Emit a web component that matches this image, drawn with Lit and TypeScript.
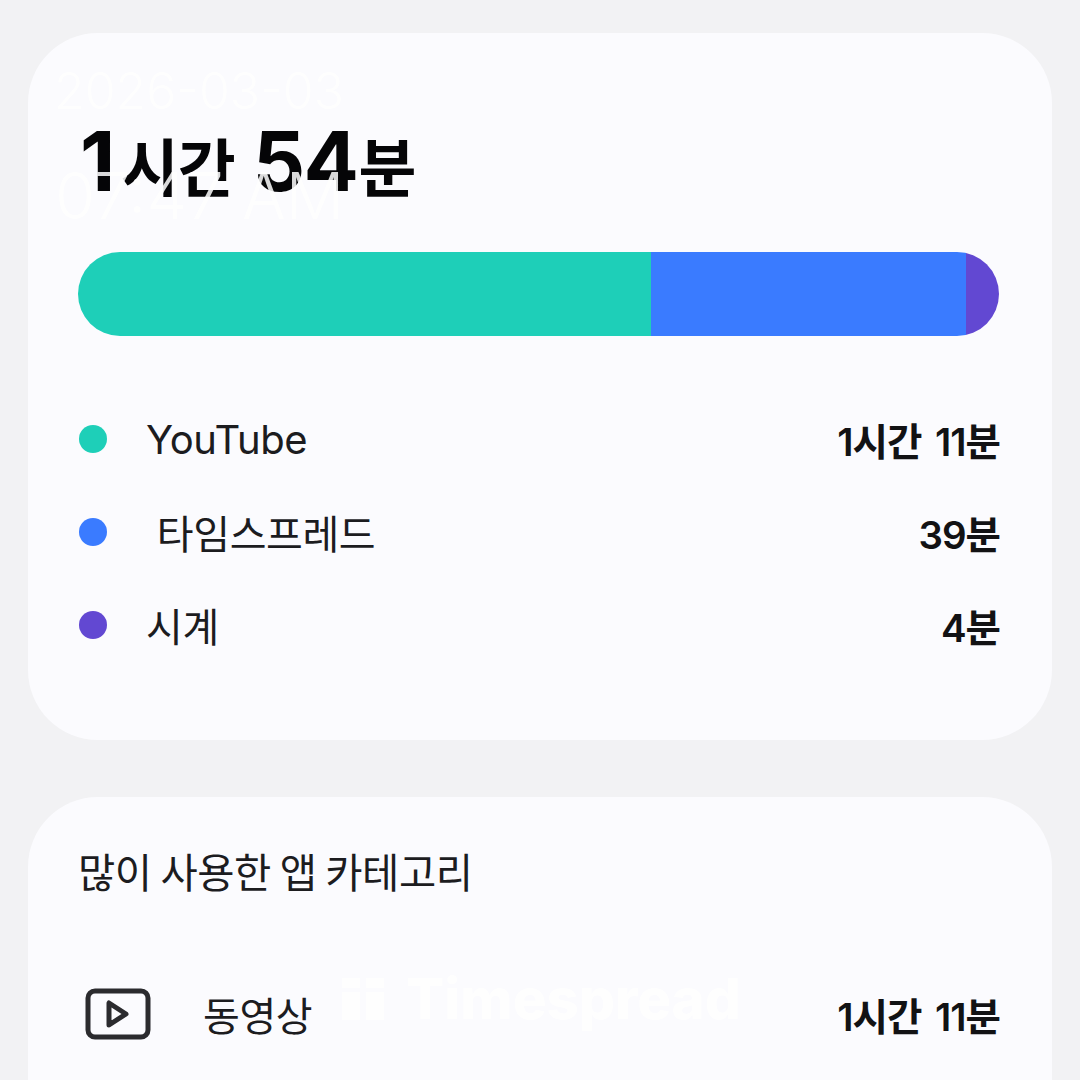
import { LitElement, html, css } from "lit";
import { customElement } from "lit/decorators.js";

const apps = [
  { name: "YouTube", time: "1시간 11분", color: "#1ecfb8", width: 573 },
  { name: "\u00a0타임스프레드", time: "39분", color: "#3a7bff", width: 315 },
  { name: "시계", time: "4분", color: "#6248d2", width: 33 },
];

@customElement("app-root")
export class AppRoot extends LitElement {
  static styles = css`
    :host {
      display: block;
      position: relative;
      width: 1080px;
      height: 1080px;
      overflow: hidden;
      background: #f2f2f4;
      font-family: "Noto Sans CJK KR", "Inter", sans-serif;
      color: #1c1c1f;
    }
    .page {
      display: flex;
      flex-direction: column;
      gap: 57px;
      padding: 33px 28px 0;
    }
    .card {
      background: #fbfbfe;
      border-radius: 70px;
      padding: 0 52px 0 50px;
    }
    .usage {
      height: 707px;
      box-sizing: border-box;
      padding-top: 89px;
    }
    .total {
      font-family: "Inter", "Noto Sans CJK KR", sans-serif;
      font-size: 82px;
      line-height: 80px;
      height: 80px;
      font-weight: 700;
      letter-spacing: -1.5px;
      color: #050507;
      margin: 0 0 50px;
      padding-left: 2px;
      white-space: nowrap;
    }
    .total .unit {
      font-family: "Noto Sans CJK KR", sans-serif;
      font-size: 63px;
      font-weight: 700;
      letter-spacing: -1px;
      margin-left: 7px;
    }
    .total .unit.last {
      margin-left: 1px;
    }
    .bar {
      display: flex;
      height: 84px;
      width: 921px;
      border-radius: 42px;
      overflow: hidden;
      margin-bottom: 73px;
    }
    .rows {
      display: flex;
      flex-direction: column;
      gap: 33px;
    }
    .row {
      display: flex;
      align-items: center;
      height: 60px;
      font-size: 40px;
    }
    .dot {
      width: 28px;
      height: 28px;
      border-radius: 50%;
      margin: 0 39px 0 1px;
    }
    .name {
      flex: 1;
      font-family: "Inter", "Noto Sans CJK KR", sans-serif;
      letter-spacing: -0.4px;
      white-space: pre;
    }
    .time {
      font-family: "Inter", "Noto Sans CJK KR", sans-serif;
      font-weight: 600;
      font-size: 38.5px;
      letter-spacing: -1px;
      word-spacing: 5px;
      color: #121214;
    }
    .category {
      height: 400px;
      padding: 47px 52px 0 50px;
      box-sizing: border-box;
    }
    .title {
      font-size: 40.5px;
      line-height: 54px;
      letter-spacing: -0.4px;
      margin: 0 0 84px;
      font-weight: 400;
    }
    .cat-row {
      display: flex;
      align-items: center;
      height: 64px;
      font-size: 40px;
    }
    .cat-row svg {
      width: 66px;
      height: 52px;
      margin: 0 52px 0 7px;
      flex: none;
    }
    .mark {
      position: absolute;
      color: #fff;
      white-space: nowrap;
      font-family: "Inter", sans-serif;
      pointer-events: none;
    }
    .date {
      left: 54px;
      top: 58px;
      font-size: 50px;
      line-height: 66px;
      font-weight: 300;
      opacity: 0.75;
    }
    .clock {
      left: 55px;
      top: 161px;
      font-size: 65px;
      line-height: 70px;
      font-weight: 300;
      opacity: 0.85;
    }
    .brand {
      left: 340px;
      top: 966px;
      display: flex;
      align-items: center;
      gap: 20px;
      font-size: 56.5px;
      line-height: 66px;
      font-weight: 800;
      opacity: 0.75;
    }
    .brand svg {
      width: 46px;
      height: 46px;
    }
  `;

  render() {
    return html`
      <div class="page">
        <section class="card usage">
          <h1 class="total">1<span class="unit">시간</span> 54<span class="unit last">분</span></h1>
          <div class="bar">
            ${apps.map(
              (a) => html`<div style="width:${a.width}px;background:${a.color}"></div>`
            )}
          </div>
          <div class="rows">
            ${apps.map(
              (a) => html`
                <div class="row">
                  <span class="dot" style="background:${a.color}"></span>
                  <span class="name">${a.name}</span>
                  <span class="time">${a.time}</span>
                </div>
              `
            )}
          </div>
        </section>
        <section class="card category">
          <h2 class="title">많이 사용한 앱 카테고리</h2>
          <div class="cat-row">
            <svg viewBox="0 0 66 52" fill="none" stroke="#2b2b2e" stroke-width="5" stroke-linejoin="round">
              <rect x="3" y="3" width="60" height="46" rx="7"></rect>
              <path d="M24 15v22l17-11z"></path>
            </svg>
            <span class="name">동영상</span>
            <span class="time">1시간 11분</span>
          </div>
        </section>
      </div>
      <div class="mark date">2026-03-03</div>
      <div class="mark clock">07:47 AM</div>
      <div class="mark brand">
        <svg viewBox="0 0 46 46" fill="#fff">
          <rect x="2" y="2" width="18" height="10"></rect>
          <rect x="26" y="2" width="18" height="10"></rect>
          <rect x="2" y="16" width="18" height="28"></rect>
          <rect x="26" y="16" width="18" height="28"></rect>
        </svg>
        <span>Timespread</span>
      </div>
    `;
  }
}
